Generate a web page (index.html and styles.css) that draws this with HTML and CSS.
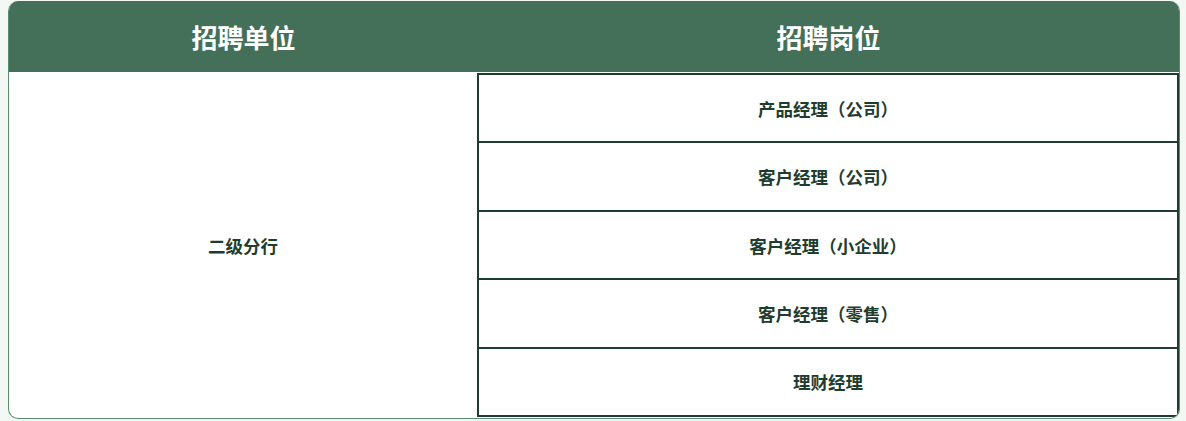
FILE: index.html
```html
<!DOCTYPE html>
<html lang="zh-CN">
<head>
<meta charset="utf-8">
<link rel="stylesheet" href="styles.css">
</head>
<body>
<div class="table">
  <div class="head">
    <div class="hcell unit">招聘单位</div>
    <div class="hcell post">招聘岗位</div>
  </div>
  <div class="body">
    <div class="left">二级分行</div>
    <div class="right">
      <div class="row">产品经理（公司）</div>
      <div class="row">客户经理（公司）</div>
      <div class="row">客户经理（小企业）</div>
      <div class="row">客户经理（零售）</div>
      <div class="row">理财经理</div>
    </div>
  </div>
</div>
</body>
</html>
```
FILE: styles.css
```css
html, body {
  margin: 0;
  padding: 0;
  background: #f3f8f5;
}
body {
  padding: 1px 6px 0 8px;
  font-family: "Noto Sans CJK SC", "Noto Sans", sans-serif;
}
.table {
  width: 1170px;
  border: 1px solid #5d8a72;
  border-top: none;
  border-radius: 10px;
  overflow: hidden;
  background: #ffffff;
}
.head {
  display: flex;
  height: 71px;
  background: #44705a;
  color: #ffffff;
  font-weight: 700;
  font-size: 26px;
}
.hcell {
  display: flex;
  align-items: center;
  justify-content: center;
}
.unit {
  width: 469px;
}
.post {
  flex: 1;
}
.body {
  display: flex;
  height: 346px;
}
.left {
  width: 468px;
  display: flex;
  align-items: center;
  justify-content: center;
  color: #1f3d2f;
  font-weight: 700;
  font-size: 17.5px;
}
.right {
  flex: 1;
  margin: 1px 0 1px 0;
  border: 2px solid #1f3d2f;
  display: flex;
  flex-direction: column;
}
.row {
  flex: 1;
  display: flex;
  align-items: center;
  justify-content: center;
  color: #1f3d2f;
  font-weight: 700;
  font-size: 17.5px;
}
.row + .row {
  border-top: 2px solid #1f3d2f;
}
```
